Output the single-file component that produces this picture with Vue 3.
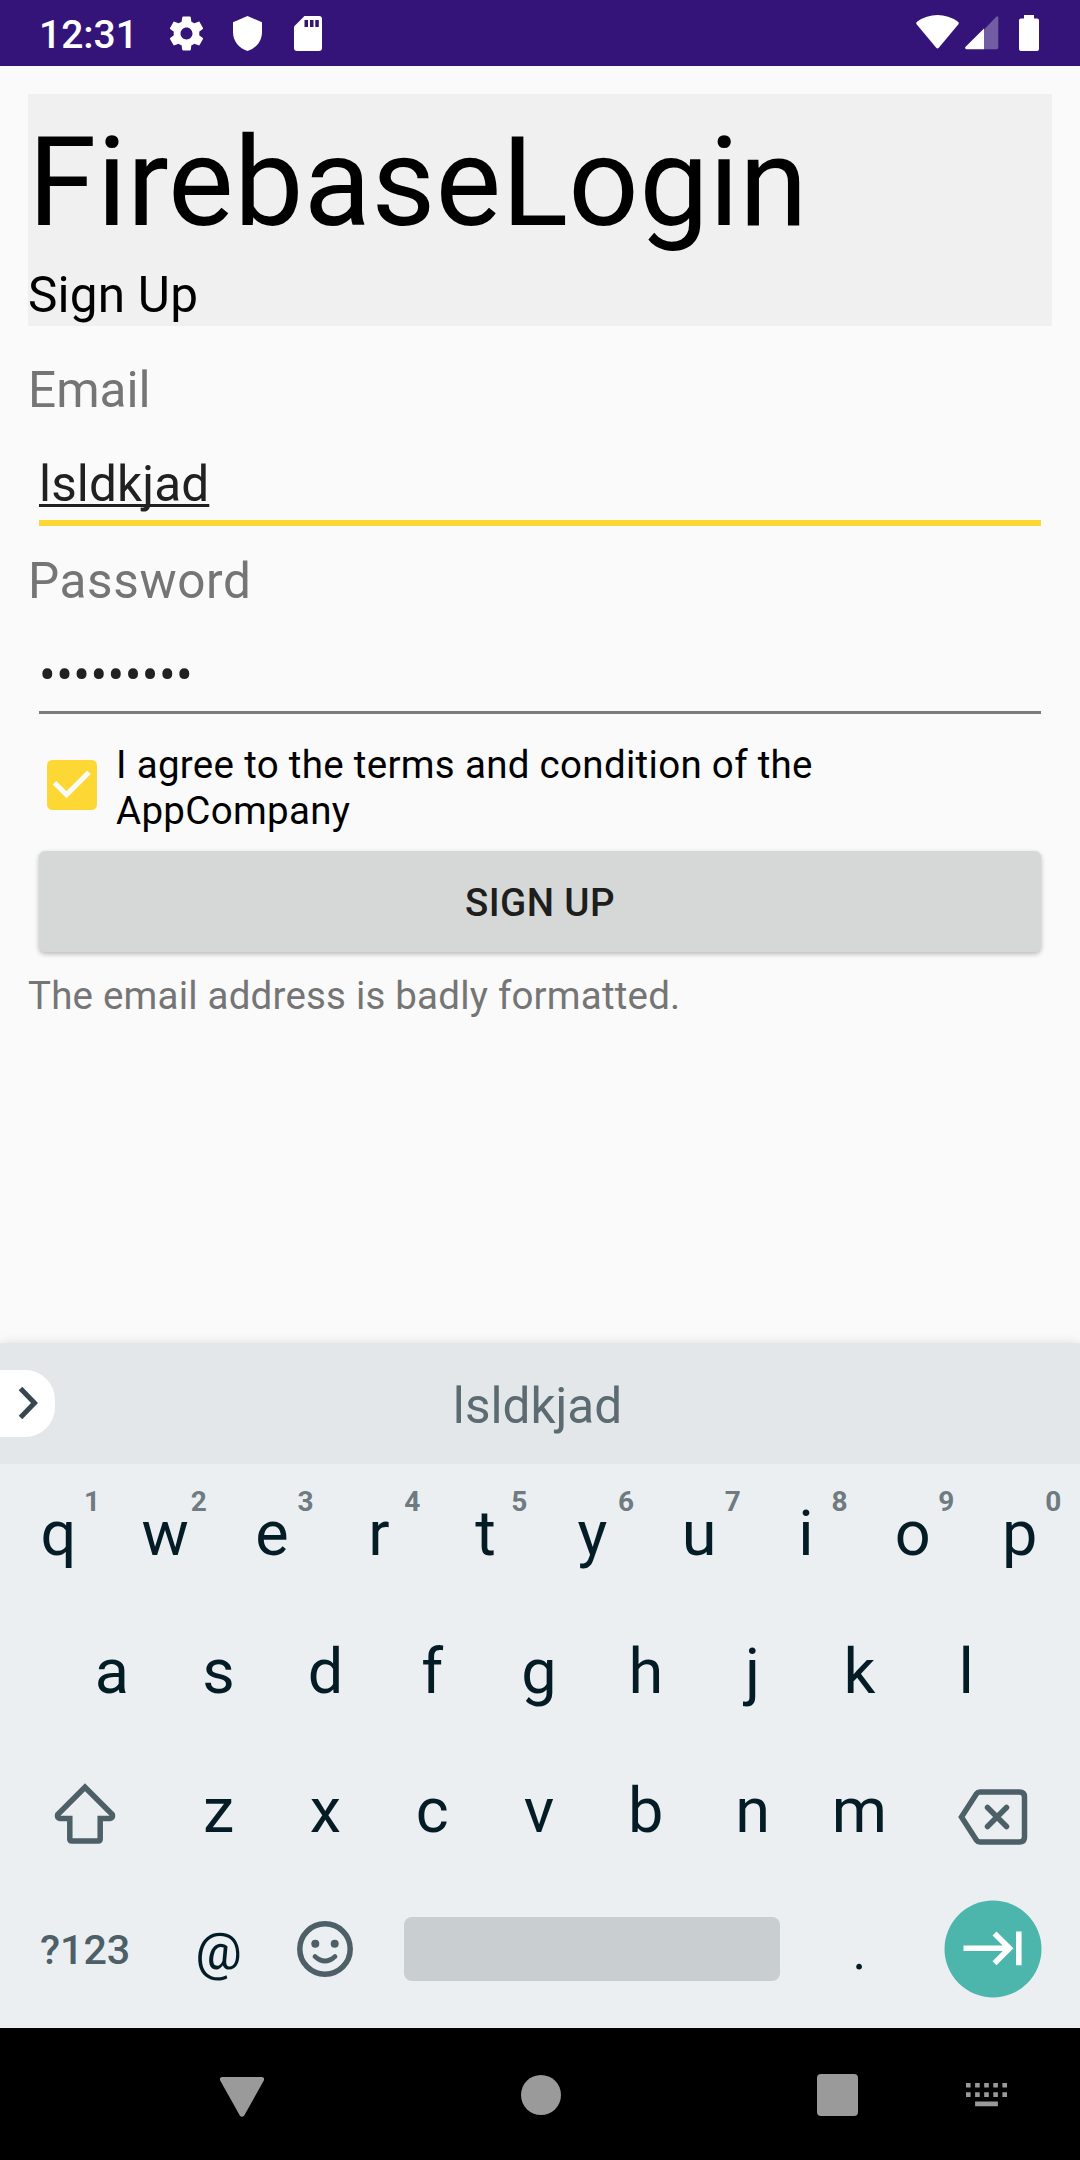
<script setup>
import { ref } from 'vue'

const email = ref('lsldkjad')
const password = ref('•••••••••')
const topRow = [...'qwertyuiop'].map((letter, i) => ({ letter, hint: (i + 1) % 10 }))
const homeRow = [...'asdfghjkl']
const bottomRow = [...'zxcvbnm']
</script>

<template>
  <div class="screen">
    <header class="status">
      <span class="clock">12:31</span>
      <svg class="gear" width="41" height="41" viewBox="0 0 24 24" fill="#fff">
        <path d="M19.43 12.98c.04-.32.07-.64.07-.98s-.03-.66-.07-.98l2.11-1.65c.19-.15.24-.42.12-.64l-2-3.46c-.12-.22-.39-.3-.61-.22l-2.49 1c-.52-.4-1.08-.73-1.69-.98l-.38-2.65C14.46 2.18 14.25 2 14 2h-4c-.25 0-.46.18-.49.42l-.38 2.65c-.61.25-1.17.59-1.69.98l-2.49-1c-.23-.09-.49 0-.61.22l-2 3.46c-.13.22-.07.49.12.64l2.11 1.65c-.04.32-.07.65-.07.98s.03.66.07.98l-2.11 1.65c-.19.15-.24.42-.12.64l2 3.46c.12.22.39.3.61.22l2.49-1c.52.4 1.08.73 1.69.98l.38 2.65c.03.24.24.42.49.42h4c.25 0 .46-.18.49-.42l.38-2.65c.61-.25 1.17-.59 1.69-.98l2.49 1c.23.09.49 0 .61-.22l2-3.46c.12-.22.07-.49-.12-.64l-2.11-1.65zM12 15.5c-1.93 0-3.5-1.57-3.5-3.5s1.57-3.5 3.5-3.5 3.5 1.57 3.5 3.5-1.57 3.5-3.5 3.5z" />
      </svg>
      <svg class="shield" width="29" height="35" viewBox="0 0 29 35" fill="#fff">
        <path d="M14.5 0L29 6.2V16C29 25 23 32.5 14.500 35C6 32.500 0 25 0 16V6.200Z" />
      </svg>
      <svg class="sd" width="28" height="35" viewBox="0 0 28 35">
        <path fill="#fff" d="M10.500 0H25Q28 0 28 3V32Q28 35 25 35H3Q0 35 0 32V10.500Z" />
        <path fill="#341478" d="M10.500 4h3.500v7h-3.500zM16 4h3.500v7H16zM21.300 4h3.500v7h-3.500z" />
      </svg>
      <svg class="wifi" width="43" height="34" viewBox="0 0 43 34" fill="#fff">
        <path d="M.8 9.500Q-.5 7.800 1.300 6.500Q10.500 0 21.500 0T41.700 6.500Q43.500 7.800 42.200 9.500L22.800 32.800Q21.500 34.200 20.200 32.800Z" />
      </svg>
      <svg class="signal" width="34" height="34" viewBox="0 0 34 34">
        <path fill="#735da2" d="M19 13.500L31.300.8Q33.300-.5 33.300 2V31.500Q33.300 33.300 31.500 33.300H19Z" />
        <path fill="#fff" d="M19 12.500V33.300H1.500Q-.8 32.800.6 30.800Z" />
      </svg>
      <svg class="battery" width="20" height="36" viewBox="0 0 20 36" fill="#fff">
        <path d="M5 0H15V3.500H18Q20 3.500 20 5.500V34Q20 36 18 36H2Q0 36 0 34V5.500Q0 3.500 2 3.500H5Z" />
      </svg>
    </header>

    <main class="content">
      <section class="banner">
        <h1>FirebaseLogin</h1>
        <h2>Sign Up</h2>
      </section>
      <label class="label email-label">Email</label>
      <div class="field focused"><span class="typed">{{ email }}</span></div>
      <label class="label password-label">Password</label>
      <div class="field"><span class="dots">{{ password }}</span></div>
      <div class="terms">
        <svg class="checkbox" width="50" height="50" viewBox="0 0 50 50">
          <rect width="50" height="50" rx="5.500" fill="#fdd835" />
          <path d="M7.500 22.800L19.500 34.800L42 12.300" fill="none" stroke="#fafafa" stroke-width="5" />
        </svg>
        <p>I agree to the terms and condition of the<br />AppCompany</p>
      </div>
      <button class="submit">SIGN UP</button>
      <p class="error">The email address is badly formatted.</p>
    </main>

    <section class="keyboard">
      <div class="suggestions">
        <div class="expand">
          <svg width="20" height="34" viewBox="0 0 20 34">
            <path d="M2.500 2.500L16.500 17L2.500 31.500" fill="none" stroke="#37474f" stroke-width="5" />
          </svg>
        </div>
        <span class="suggestion">{{ email }}</span>
      </div>
      <div class="row">
        <div v-for="key in topRow" :key="key.letter" class="key">
          {{ key.letter }}<span class="hint">{{ key.hint }}</span>
        </div>
      </div>
      <div class="row">
        <div v-for="letter in homeRow" :key="letter" class="key">{{ letter }}</div>
      </div>
      <div class="row">
        <div class="key wide">
          <svg class="shift" width="62" height="62" viewBox="0 0 62 62">
            <path d="M31 4.200L58.300 31.500Q59.500 35 56 35.500H46.200V56Q46.200 58 44.200 58H17.800Q15.800 58 15.800 56V35.500H6Q2.500 35 3.700 31.500Z" fill="none" stroke="#4d5f67" stroke-width="5.500" />
          </svg>
        </div>
        <div v-for="letter in bottomRow" :key="letter" class="key">{{ letter }}</div>
        <div class="key wide">
          <svg class="backspace" width="70" height="56" viewBox="0 0 70 56" fill="none" stroke="#4d5f67" stroke-width="5.500">
            <path d="M3.500 28L18.300 5Q19.800 3 22 3H61.500Q66.500 3 66.500 8V48Q66.500 53 61.500 53H22Q19.800 53 18.300 51Z" />
            <path d="M29.500 18.500L48.500 37.500M48.500 18.500L29.500 37.500" stroke-linecap="round" />
          </svg>
        </div>
      </div>
      <div class="row">
        <div class="key wide symbols">?123</div>
        <div class="key small">@</div>
        <div class="key">
          <svg class="smiley" width="56" height="56" viewBox="0 0 56 56">
            <circle cx="28" cy="28" r="25.200" fill="none" stroke="#4d5f67" stroke-width="5.500" />
            <circle cx="18.300" cy="22.800" r="4" fill="#4d5f67" />
            <circle cx="37.700" cy="22.800" r="4" fill="#4d5f67" />
            <path d="M18 35.500Q28 44.500 38 35.500" fill="none" stroke="#4d5f67" stroke-width="4.800" stroke-linecap="round" />
          </svg>
        </div>
        <div class="key space"><span class="bar"></span></div>
        <div class="key small">.</div>
        <div class="key wide">
          <svg class="enter" width="98" height="98" viewBox="0 0 98 98">
            <circle cx="49" cy="49" r="48.500" fill="#4db6ac" />
            <path d="M19.500 48.300H65M50.500 33.500L65.500 48.300L50.500 63.200M74.800 31.500V65.200" fill="none" stroke="#fff" stroke-width="5.600" />
          </svg>
        </div>
      </div>
    </section>

    <nav class="nav">
      <svg class="back" width="44" height="40" viewBox="0 0 44 40" fill="#9a9a9a">
        <path d="M2 0H42Q45 .5 43.800 3.500L24.200 38.500Q22 41 19.800 38.500L.2 3.500Q-1 .5 2 0Z" />
      </svg>
      <span class="home"></span>
      <span class="recents"></span>
      <svg class="ime" width="42" height="24" viewBox="0 0 42 24" fill="#9a9a9a">
        <path d="M0 0h4.600v4.600H0zM9.100 0h4.600v4.600H9.100zM18.200 0h4.600v4.600h-4.600zM27.300 0h4.600v4.600h-4.600zM36.400 0H41v4.600h-4.600zM0 9.300h4.600v4.600H0zM9.100 9.300h4.600v4.600H9.100zM18.200 9.300h4.600v4.600h-4.600zM27.300 9.300h4.600v4.600h-4.600zM36.400 9.300H41v4.600h-4.600zM9.100 18.400h22.800v4.800H9.100z" />
      </svg>
    </nav>
  </div>
</template>

<style>
body {
  margin: 0;
}
</style>

<style scoped>
.screen {
  width: 1080px;
  height: 2160px;
  display: flex;
  flex-direction: column;
  overflow: hidden;
  background: #fafafa;
  font-family: Roboto, 'Liberation Sans', sans-serif;
}
.screen * {
  box-sizing: border-box;
}
svg {
  display: block;
  flex: none;
}
h1,
h2,
p {
  margin: 0;
  font-weight: 400;
}
.status {
  height: 66px;
  flex: none;
  display: flex;
  align-items: center;
  padding: 0 41px 0 39px;
  background: #341478;
}
.clock {
  color: #fff;
  font-size: 39px;
  font-weight: 500;
  line-height: 46px;
  width: 127px;
  padding-top: 3px;
}
.shield { margin-left: 26px; }
.sd { margin-left: 32px; }
.wifi { margin: 0 6px 2px auto; }
.signal { margin-right: 20px; }

.content {
  flex: 1;
  padding: 28px 28px 0;
}
.banner {
  height: 232px;
  background: #f0f0f0;
  color: #000;
}
h1 {
  height: 165px;
  padding-top: 16px;
  font-size: 123.75px;
  line-height: 145px;
  letter-spacing: 0.28px;
}
h2 {
  padding-top: 7px;
  font-size: 49.5px;
  line-height: 58px;
  letter-spacing: 0.2px;
}
.label {
  display: block;
  font-size: 49.5px;
  line-height: 58px;
  color: #757575;
}
.email-label { margin-top: 35px; }
.field {
  height: 68px;
  margin: 36px 11px 0;
  color: #212121;
  font-size: 49.5px;
  line-height: 58px;
  border-bottom: 3px solid #7c7c7c;
}
.focused {
  height: 71px;
  border-bottom: 6px solid #fdd835;
}
.typed {
  letter-spacing: 0.12px;
  text-decoration: underline;
  text-decoration-thickness: 3px;
  text-underline-offset: 3px;
  text-decoration-skip-ink: none;
}
.dots { letter-spacing: 0.43px; }
.password-label {
  margin-top: 26px;
  letter-spacing: 0.6px;
}
.terms {
  display: flex;
  align-items: center;
  height: 92px;
  margin: 28px 0 0 19px;
  gap: 19px;
  font-size: 38.5px;
  line-height: 46px;
  letter-spacing: 0.31px;
  color: #000;
}
.checkbox { margin-bottom: 6px; }
.submit {
  display: block;
  width: 1002px;
  height: 101px;
  margin: 17px 0 0 11px;
  padding: 2px 0 0;
  border: 0;
  border-radius: 6px;
  background: #d6d7d7;
  box-shadow: 0 2px 5px rgba(0, 0, 0, 0.27);
  color: #1e1e1e;
  font-family: inherit;
  font-size: 38.5px;
  font-weight: 500;
  letter-spacing: 0.4px;
}
.error {
  margin-top: 21px;
  font-size: 38.5px;
  line-height: 45px;
  letter-spacing: 0.2px;
  color: #757575;
}

.keyboard {
  flex: none;
  height: 685px;
  background: #ebeff2;
  box-shadow: 0 0 10px rgba(0, 0, 0, 0.12);
  color: #041c26;
}
.suggestions {
  display: flex;
  align-items: center;
  height: 121px;
  margin-bottom: 3.500px;
  background: #e3e7ea;
}
.expand {
  width: 55px;
  height: 67px;
  padding: 16px 0 0 18px;
  border-radius: 0 30px 30px 0;
  background: #fff;
}
.suggestion {
  flex: 1;
  padding: 5px 60px 0 0;
  text-align: center;
  font-size: 49.5px;
  color: #5c6b72;
}
.row {
  display: flex;
  justify-content: center;
  height: 138.500px;
  padding-right: 2px;
}
.key {
  position: relative;
  display: flex;
  justify-content: center;
  width: 106.800px;
  padding-top: 29px;
  font-size: 63px;
  line-height: 74px;
}
.hint {
  position: absolute;
  top: 17.500px;
  left: 77px;
  width: 20px;
  text-align: center;
  font-size: 28px;
  line-height: 33px;
  font-weight: 700;
  color: #6f7b80;
}
.wide { width: 160.200px; }
.shift { margin-top: 9.500px; }
.backspace { margin-top: 15.500px; }
.symbols {
  font-size: 41.250px;
  line-height: 48px;
  font-weight: 500;
  padding-top: 43px;
  color: #4d5f67;
}
.small {
  font-size: 52px;
  line-height: 61px;
  padding-top: 38px;
}
.smiley { margin-top: 9px; }
.space { width: 427.200px; }
.bar {
  width: 376px;
  height: 64px;
  margin-top: 5px;
  border-radius: 8px;
  background: #c9ced1;
}
.enter { margin: -12px 0 0 1px; }

.nav {
  flex: none;
  display: flex;
  align-items: center;
  height: 132px;
  padding-left: 220px;
  background: #000;
}
.back { margin-top: 5px; }
.home {
  width: 40px;
  height: 40px;
  margin: 1px 0 0 256.500px;
  border-radius: 50%;
  background: #9a9a9a;
}
.recents {
  width: 41px;
  height: 42px;
  margin: 1px 0 0 256.500px;
  border-radius: 4px;
  background: #9a9a9a;
}
.ime { margin: 1px 0 0 108px; }
</style>
